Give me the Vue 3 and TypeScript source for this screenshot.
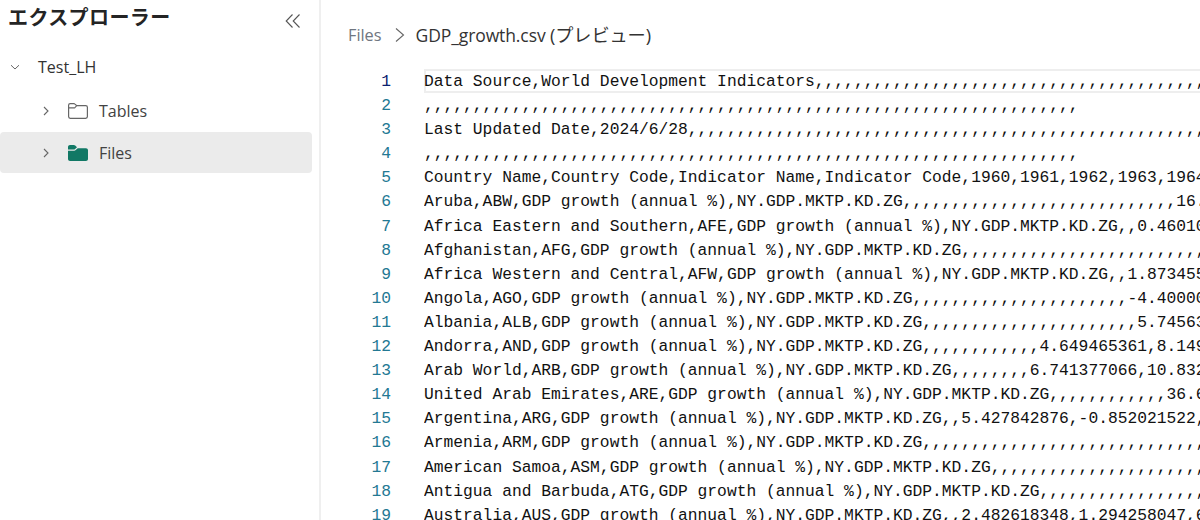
<script setup lang="ts">
const c = (n: number): string => ','.repeat(n)
const gdp = 'GDP growth (annual %),NY.GDP.MKTP.KD.ZG'
const lines: string[] = [
  'Data Source,World Development Indicators' + c(60),
  c(67),
  'Last Updated Date,2024/6/28' + c(60),
  c(67),
  'Country Name,Country Code,Indicator Name,Indicator Code,1960,1961,1962,1963,1964,1965',
  `Aruba,ABW,${gdp}${c(28)}16.1`,
  `Africa Eastern and Southern,AFE,${gdp},,0.460106`,
  `Afghanistan,AFG,${gdp}${c(40)}`,
  `Africa Western and Central,AFW,${gdp},,1.873455`,
  `Angola,AGO,${gdp}${c(22)}-4.400001`,
  `Albania,ALB,${gdp}${c(22)}5.745635`,
  `Andorra,AND,${gdp}${c(12)}4.649465361,8.149`,
  `Arab World,ARB,${gdp}${c(8)}6.741377066,10.832`,
  `United Arab Emirates,ARE,${gdp}${c(12)}36.6`,
  `Argentina,ARG,${gdp},,5.427842876,-0.852021522,`,
  `Armenia,ARM,${gdp}${c(40)}`,
  `American Samoa,ASM,${gdp}${c(40)}`,
  `Antigua and Barbuda,ATG,${gdp}${c(40)}`,
  `Australia,AUS,${gdp},,2.482618348,1.294258047,6.2`
]
</script>

<template>
  <div class="app">
    <aside class="side">
      <div class="side-head">
        <h1>エクスプローラー</h1>
        <svg class="collapse" width="16" height="16" viewBox="0 0 16 16" fill="none" stroke="#555" stroke-width="1.1">
          <path d="M7.5 1.5 1.2 8l6.3 6.5M14.5 1.5 8.2 8l6.3 6.5" />
        </svg>
      </div>
      <div class="row root">
        <svg width="12" height="12" viewBox="0 0 12 12" fill="none" stroke="#666" stroke-width="1"><path d="M2 4.2 6 8l4-3.8" /></svg>
        <span>Test_LH</span>
      </div>
      <div class="row child tables">
        <svg width="12" height="12" viewBox="0 0 12 12" fill="none" stroke="#666" stroke-width="1.1"><path d="M4 2l4 4-4 4" /></svg>
        <svg class="folder" width="22" height="18" viewBox="0 0 22 18" fill="none" stroke="#666" stroke-width="1.2">
          <path d="M1.6 3.2c0-1 .7-1.6 1.6-1.6h3.6c.5 0 .9.2 1.2.5l1.7 1.6h9c1 0 1.7.7 1.7 1.6v9.3c0 1-.7 1.7-1.7 1.7H3.2c-.9 0-1.6-.7-1.6-1.7zM1.6 5.8h5.4c.4 0 .8-.2 1.1-.4l1.7-1.7" />
        </svg>
        <span>Tables</span>
      </div>
      <div class="row child selected">
        <svg width="12" height="12" viewBox="0 0 12 12" fill="none" stroke="#666" stroke-width="1.1"><path d="M4 2l4 4-4 4" /></svg>
        <svg class="folder" width="22" height="18" viewBox="0 0 22 18" fill="#117865">
          <path d="M1 3c0-1.1.9-2 2-2h3.8c.5 0 1 .2 1.4.6L10 3.3 7.8 5.2c-.2.2-.5.3-.8.3H1z" />
          <path d="M1 6.7h6.2c.6 0 1.1-.2 1.5-.6l2-1.9H19c1.1 0 2 .9 2 2V15c0 1.1-.9 2-2 2H3c-1.1 0-2-.9-2-2z" />
        </svg>
        <span>Files</span>
      </div>
    </aside>
    <main class="main">
      <nav class="crumbs">
        <span class="parent">Files</span>
        <svg width="12" height="16" viewBox="0 0 12 16" fill="none" stroke="#666" stroke-width="1.1"><path d="M2 1.5 9.5 8 2 14.5" /></svg>
        <span class="current">GDP_growth.csv <span class="preview">(プレビュー)</span></span>
      </nav>
      <div class="editor">
        <div v-for="(line, i) in lines" :key="i" class="line" :class="{ active: i === 0 }">
          <span class="num">{{ i + 1 }}</span>
          <span class="code">{{ line }}</span>
        </div>
      </div>
    </main>
  </div>
</template>

<style>
html, body { margin: 0; background: #fff; overflow: hidden; }
</style>

<style scoped>
.app {
  width: 1200px;
  height: 520px;
  display: flex;
  overflow: hidden;
  background: #fff;
  font-family: "Open Sans", "Noto Sans CJK JP", sans-serif;
}
.side {
  width: 321px;
  box-sizing: border-box;
  border-right: 2px solid #efefef;
  flex: none;
  padding-right: 7px;
}
.side-head {
  height: 46px;
  display: flex;
  align-items: center;
  justify-content: space-between;
  padding: 0 11px 0 8px;
  box-sizing: border-box;
}
h1 {
  margin: -14px 0 0;
  font-size: 20px;
  font-weight: 700;
  color: #242424;
  letter-spacing: 0.4px;
  font-family: "Noto Sans CJK JP", sans-serif;
}
.collapse { margin-top: -5px; }
.row {
  height: 41px;
  display: flex;
  align-items: center;
  font-size: 16px;
  color: #424242;
  border-radius: 4px;
  margin-bottom: 2px;
}
.root { padding-left: 9px; gap: 17px; margin-bottom: 3px; color: #333; }
.child { padding-left: 40px; }
.tables { margin-bottom: 1px; }
.child .folder { margin-left: 15px; margin-right: 10px; }
.selected { background: #ebebeb; }
.main { flex: 1; min-width: 0; overflow: hidden; }
.crumbs {
  height: 69px;
  box-sizing: border-box;
  padding: 22px 0 0 27px;
  display: flex;
  align-items: flex-start;
  gap: 11px;
  font-size: 16.3px;
  line-height: 26px;
}
.crumbs svg { margin-top: 5px; margin-left: 1px; margin-right: -1px; }
.parent { color: #6f7680; }
.current { color: #333; font-size: 17.5px; letter-spacing: -0.1px; }
.preview { font-size: 18.2px; }
.editor { font-family: "Liberation Mono", monospace; font-size: 16.3px; }
.line {
  height: 24.1px;
  line-height: 26px;
  display: flex;
  white-space: pre;
}
.num {
  width: 70px;
  flex: none;
  text-align: right;
  color: #237893;
}
.code {
  margin-left: 33px;
  color: #111;
  flex: 1;
  min-width: 0;
  overflow: hidden;
}
.active .num { color: #0b216f; }
.active .code { box-shadow: inset 2px 0 0 #eeeeee, inset 0 2px 0 #eeeeee, inset 0 -2px 0 #eeeeee; }
</style>
